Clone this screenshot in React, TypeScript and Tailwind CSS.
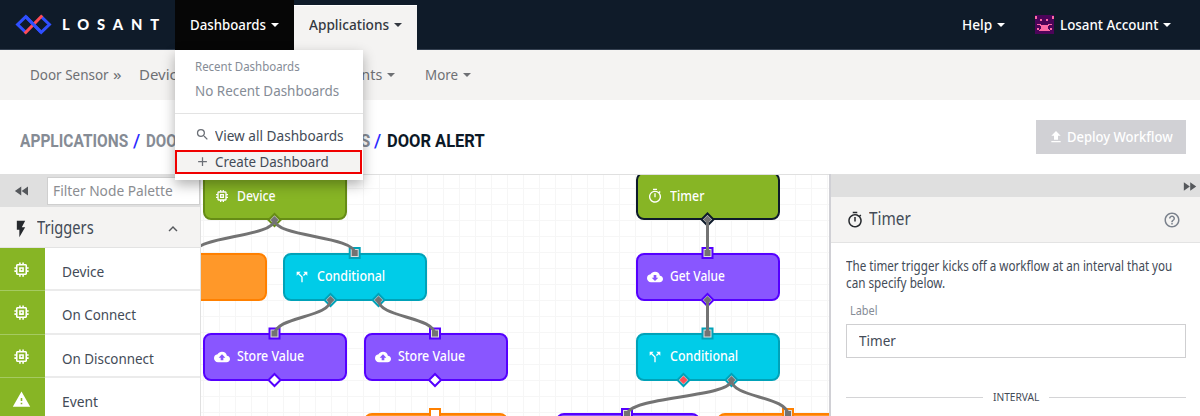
import { useLayoutEffect, useRef, useState } from "react";
import {
  MdMemory, MdOutlineTimer, MdCallSplit, MdBackup, MdCloudDownload, MdWarning, MdFileUpload,
  MdSearch, MdAdd, MdFlashOn, MdHelpOutline, MdExpandLess, MdFastRewind, MdFastForward,
} from "react-icons/md";

/* A single line of slightly condensed text, fitted to a width of `w` pixels. */
function Line({ w, className = "", children }: { w: number; className?: string; children: string }) {
  const ref = useRef<HTMLSpanElement>(null);
  const [scale, setScale] = useState(1);
  useLayoutEffect(() => {
    if (ref.current) setScale(w / ref.current.offsetWidth);
  }, [w, children]);
  return (
    <span className={`flex shrink-0 ${className}`} style={{ width: w }}>
      <span ref={ref} className="inline-block shrink-0 origin-left whitespace-nowrap" style={{ transform: `scaleX(${scale})` }}>
        {children}
      </span>
    </span>
  );
}

function Caret({ className = "" }: { className?: string }) {
  return (
    <svg className={`h-1 w-2 shrink-0 ${className}`} viewBox="0 0 8 4" fill="currentColor">
      <path d="M0 0H8L4 4Z" />
    </svg>
  );
}

function Logo() {
  return (
    <svg className="h-[22px] w-[37px] shrink-0" viewBox="0 0 37 22" fill="none" strokeWidth="3">
      <path d="M18.5 10.5L10.8 2.6L2.6 10.5L10.8 18.4M18.5 10.5L26.2 18.4L34.4 10.5L26.2 2.6" stroke="#2f4fff" />
      <path d="M10.8 18.4L26.2 2.6" stroke="#ff4b55" strokeLinecap="square" />
      <path d="M10.8 2.6L26.2 18.4" stroke="#2f4fff" />
    </svg>
  );
}

function Avatar() {
  return (
    <svg className="h-[19px] w-[19px]" viewBox="0 0 19 19" shapeRendering="crispEdges">
      <path fill="#4c0459" d="M0 0H19V19H0Z" />
      <path fill="#fd69a6" d="M0 1H2V4H0ZM17 1H19V4H17ZM5 4H7V6H5ZM11 4H13V6H11ZM2 9H6V10H2ZM13 9H17V10H13ZM5 10H14V11H5ZM6 11H13V14H6ZM2 13H4V15H2ZM15 13H17V15H15ZM5 14H14V15H5ZM4 15H15V16H4Z" />
    </svg>
  );
}

function Header() {
  return (
    <header className="relative z-20 flex h-[50px] shrink-0 border-b border-[#344050] bg-[#0f1b29] text-white">
      <div className="flex w-[175px] items-center pl-[15px]">
        <Logo />
        <Line w={105} className="mb-px ml-[10px] font-[Lato] text-[15px] leading-[18px] font-black tracking-[8px]">LOSANT</Line>
      </div>
      <div className="relative h-[50px] w-[119px] bg-[#060606]">
        <div className="flex h-full items-center pb-px pl-[15px]">
          <Line w={76} className="text-[15px] font-medium">Dashboards</Line>
          <Caret className="ml-[5px]" />
        </div>
        <Menu />
      </div>
      <div className="mt-[5px] flex h-[45px] w-[123px] items-center border-t border-white bg-[#f4f3f2] pb-[7px] pl-[15px] text-[#333840]">
        <Line w={80} className="text-[15px] font-medium">Applications</Line>
        <Caret className="ml-[5px]" />
      </div>
      <div className="ml-auto flex items-center pr-[29px]">
        <Line w={30} className="text-[15px] font-medium">Help</Line>
        <Caret className="mr-[30px] ml-[5px]" />
        <Avatar />
        <Line w={98} className="ml-[6px] text-[15px] font-medium">Losant Account</Line>
        <Caret className="ml-[5px]" />
      </div>
    </header>
  );
}

function Menu() {
  return (
    <div className="absolute top-[50px] left-0 h-[130px] w-[188px] bg-white text-[#434b57] shadow-[0_5px_12px_rgba(0,0,0,0.3)]">
      <div className="flex h-[64px] flex-col border-b border-[#e3e3e3] pt-[6px] pl-5 text-[#858c96]">
        <Line w={105} className="text-[13px] leading-5">Recent Dashboards</Line>
        <Line w={144} className="mt-[3px] text-[15px] leading-[22px]">No Recent Dashboards</Line>
      </div>
      <div className="mt-[8px] flex h-[25px] items-center pl-[20px]">
        <MdSearch className="mr-[5px] size-[15px] text-[#6b6f76]" />
        <Line w={129} className="text-[15px] leading-5">View all Dashboards</Line>
      </div>
      <div className="mt-[3px] flex h-[24px] w-[187px] items-center border-2 border-[#f00000] bg-[#f4f3f2] pb-[2px] pl-[18px]">
        <MdAdd className="mr-[5px] size-[15px] text-[#6b6f76]" />
        <Line w={114} className="text-[15px] leading-5">Create Dashboard</Line>
      </div>
    </div>
  );
}

function SubNav() {
  return (
    <nav className="flex h-[50px] shrink-0 items-center bg-[#f4f3f2] pb-px pl-[30px] text-[15px] text-[#6e7074]">
      <Line w={79}>Door Sensor</Line>
      <Line w={9} className="ml-[4px]">»</Line>
      <Line w={53} className="ml-[17px]">Devices</Line>
      <Caret className="ml-[5px]" />
      <div className="flex w-[190px] items-center justify-end">
        <Line w={44}>Events</Line>
        <Caret className="ml-[5px]" />
      </div>
      <Line w={33} className="ml-[30px]">More</Line>
      <Caret className="ml-[5px]" />
    </nav>
  );
}

function TitleRow() {
  return (
    <div className="flex h-[74px] shrink-0 items-center bg-white pr-[14px] pl-5">
      <div className="flex pt-[10px] font-[Roboto] text-[18.5px] font-bold text-[#868c95]">
        <Line w={108}>APPLICATIONS</Line>
        <Line w={7} className="ml-[5px] font-medium text-[#2b2bff]">/</Line>
        <Line w={102} className="ml-[6px]">DOOR SENSOR</Line>
        <Line w={99} className="ml-[23px]">WORKFLOWS</Line>
        <Line w={7} className="ml-[4px] font-medium text-[#2b2bff]">/</Line>
        <Line w={98} className="ml-[6px] text-[#0c1826]">DOOR ALERT</Line>
      </div>
      <button className="ml-auto flex h-[34px] w-[150px] items-center bg-[#d1d1d5] pb-px pl-[12px] text-[15px] font-medium text-white">
        <MdFileUpload className="mr-[3px] size-4" />
        <Line w={106}>Deploy Workflow</Line>
      </button>
    </div>
  );
}

const triggers = [
  { name: "Device", w: 42, icon: MdMemory },
  { name: "On Connect", w: 74, icon: MdMemory },
  { name: "On Disconnect", w: 92, icon: MdMemory },
  { name: "Event", w: 36, icon: MdWarning },
];

function Palette() {
  return (
    <aside className="flex w-[201px] shrink-0 flex-col border-r border-[#e0e0e0] bg-white text-[#434b57]">
      <div className="flex h-[33px] shrink-0 items-center bg-[#dfdfdf]">
        <MdFastRewind className="mr-[16px] ml-[13px] size-[18px] text-[#55585c]" />
        <div className="flex h-[28px] w-[153px] items-center border border-[#cfcfcf] bg-white pl-[5px] text-[#8b8d91]">
          <Line w={120} className="text-[15px]">Filter Node Palette</Line>
        </div>
      </div>
      <div className="flex h-[41px] shrink-0 items-center border-b border-[#e3e3e3] bg-[#f4f3f2] pl-[11px]">
        <MdFlashOn className="mt-[3px] size-5 text-[#26292e]" />
        <Line w={57} className="mt-px ml-[6px] text-[17.5px]">Triggers</Line>
        <MdExpandLess className="mt-[3px] mr-[18px] ml-auto size-[18px] text-[#55585c]" />
      </div>
      {triggers.map(({ name, w, icon: Icon }) => (
        <div key={name} className="flex h-[43.4px] shrink-0">
          <div className="flex w-[45px] justify-center border-b border-[#a5ca62] bg-[#87b525] pt-[12px] pr-[3px] text-white">
            <Icon className="size-[19px]" />
          </div>
          <div className="flex flex-1 items-center border-b-2 border-[#ebebeb] pt-[5px] pl-[16.5px]">
            <Line w={w} className="text-[15px]">{name}</Line>
          </div>
        </div>
      ))}
    </aside>
  );
}

const PURPLE = "#5500ff";
const TEAL = "#00a2b8";
const ORANGE = "#ff8000";
const GREEN = "#668c16";
const NAVY = "#0d1a2a";

const nodes = [
  { at: "left-[2px] top-[-2px]", skin: "border-[#668c16] bg-[#87b525]", icon: MdMemory, name: "Device", w: 39 },
  { at: "left-[-78px] top-[78.5px]", skin: "border-[#ff8000] bg-[#ff9829]", name: "", w: 0 },
  { at: "left-[82px] top-[78.5px]", skin: "border-[#00a2b8] bg-[#00cce8]", icon: MdCallSplit, name: "Conditional", w: 68 },
  { at: "left-[2px] top-[158.5px]", skin: "border-[#5500ff] bg-[#8956ff]", icon: MdBackup, name: "Store Value", w: 67 },
  { at: "left-[162.5px] top-[158.5px]", skin: "border-[#5500ff] bg-[#8956ff]", icon: MdBackup, name: "Store Value", w: 67 },
  { at: "left-[162.5px] top-[238.5px]", skin: "border-[#ff8000] bg-[#ff9829]", name: "", w: 0 },
  { at: "left-[435px] top-[-2px]", skin: "border-[#0d1a2a] bg-[#87b525]", icon: MdOutlineTimer, name: "Timer", w: 34 },
  { at: "left-[435px] top-[78.5px]", skin: "border-[#5500ff] bg-[#8956ff]", icon: MdCloudDownload, name: "Get Value", w: 55 },
  { at: "left-[435px] top-[158.5px]", skin: "border-[#00a2b8] bg-[#00cce8]", icon: MdCallSplit, name: "Conditional", w: 68 },
  { at: "left-[355px] top-[238.5px]", skin: "border-[#5500ff] bg-[#8956ff]", name: "", w: 0 },
  { at: "left-[516px] top-[238.5px]", skin: "border-[#ff8000] bg-[#ff9829]", name: "", w: 0 },
];

const inputs: [number, number, string, boolean][] = [
  [354.7, 253, TEAL, true],
  [274.5, 333.5, PURPLE, true],
  [435, 333.5, PURPLE, true],
  [435, 414, ORANGE, false],
  [707.5, 253, PURPLE, true],
  [707.5, 333.5, TEAL, true],
  [627, 414, PURPLE, true],
  [788, 414, ORANGE, true],
];

const outputs: [number, number, string, string][] = [
  [274.5, 220, GREEN, "#737373"],
  [330.5, 300, TEAL, "#737373"],
  [378.5, 300, TEAL, "#737373"],
  [274.5, 380, PURPLE, ""],
  [435, 380, PURPLE, ""],
  [707.5, 219.5, NAVY, "#737373"],
  [707.5, 300, PURPLE, "#737373"],
  [683.5, 380, TEAL, "#ff4d55"],
  [731.5, 380, TEAL, "#737373"],
];

const wires = [
  "M274.5 220C274.5 237 194.5 236 194.5 253",
  "M274.5 220C274.5 237 354.7 236 354.7 253",
  "M330.5 300C330.5 318 274.5 316 274.5 335",
  "M378.5 300C378.5 318 435 316 435 335",
  "M707.5 220V254",
  "M707.5 300V334",
  "M731.5 380C731.5 398 627 396 627 415",
  "M731.5 380C731.5 398 788 396 788 415",
];

function Canvas() {
  return (
    <main className="relative w-[628px] shrink-0 overflow-hidden border-t border-[#e0e0e0] bg-white bg-[linear-gradient(to_right,#f6f6f6_1px,transparent_1px),linear-gradient(#f6f6f6_1px,transparent_1px)] bg-[length:16px_16px] bg-[position:2px_13px]">
      <div className="absolute -top-px left-0 h-[242px] w-[628px]">
        {nodes.map(({ at, skin, icon: Icon, name, w }) => (
          <div key={at} className={`absolute flex h-12 w-36 items-center rounded-[8px] border-2 pl-[9px] text-white ${at} ${skin}`}>
            {Icon && (
              <span className="mr-[7px] flex w-4 shrink-0 justify-center">
                <Icon className="size-4 shrink-0" />
              </span>
            )}
            {name && <Line w={w} className="text-[13.5px] font-medium">{name}</Line>}
          </div>
        ))}
        <svg className="absolute inset-0 h-[242px] w-[628px]" viewBox="201 174 628 242" fill="none">
          {inputs.map(([x, y, color, wired]) => (
            <g key={`${x}-${y}`}>
              <rect x={x - 5} y={y - 5} width="10" height="10" fill={wired ? "#dedede" : "#ffffff"} stroke={color} strokeWidth="2" />
              {wired && <rect x={x - 3} y={y - 3} width="6" height="6" fill="#737373" />}
            </g>
          ))}
          {outputs.map(([x, y, color, core]) => (
            <g key={`${x}-${y}`} transform={`translate(${x} ${y})`}>
              <path d="M0 -6L6 0L0 6L-6 0Z" fill={core ? "#dedede" : "#ffffff"} stroke={color} strokeWidth="2" />
              {core && <path d="M0 -4L4 0L0 4L-4 0Z" fill={core} />}
            </g>
          ))}
          {wires.map((d) => <path key={d} d={d} stroke="#737373" strokeWidth="3" />)}
        </svg>
      </div>
    </main>
  );
}

function Inspector() {
  return (
    <aside className="flex flex-1 flex-col border-l-2 border-[#d0d0d5] bg-white text-[#434b57]">
      <div className="flex h-[23px] shrink-0 items-center justify-end border-t border-[#e0e0e0] bg-[#dfdfdf] pr-[2px]">
        <MdFastForward className="size-[17px] text-[#55585c]" />
      </div>
      <div className="flex h-[46px] shrink-0 items-center border-b border-[#e3e3e3] bg-[#f4f3f2] pr-[19px] pl-[15px]">
        <MdOutlineTimer className="size-[18px] text-[#26292e]" />
        <Line w={42} className="ml-[5px] pb-[2px] text-[17.5px]">Timer</Line>
        <MdHelpOutline className="ml-auto size-[18px] text-[#7b828d]" />
      </div>
      <div className="flex flex-col items-start pt-[15px] pr-[14px] pl-[15px]">
        <Line w={326} className="text-[13.5px] leading-[17px]">The timer trigger kicks off a workflow at an interval that you</Line>
        <Line w={99} className="text-[13.5px] leading-[17px]">can specify below.</Line>
        <Line w={28} className="mt-[10px] ml-1 text-[12.5px] leading-[18px] text-[#858c96]">Label</Line>
        <div className="mt-[4px] flex h-[34px] w-full items-center border border-[#cfcfd1] pb-px pl-[12px]">
          <Line w={37} className="text-[15px]">Timer</Line>
        </div>
        <div className="mt-[30px] flex w-full items-center gap-[10px]">
          <span className="h-px flex-1 bg-[#d4d4d6]" />
          <Line w={46} className="text-[11.5px] leading-[18px]">INTERVAL</Line>
          <span className="h-px flex-1 bg-[#d4d4d6]" />
        </div>
      </div>
    </aside>
  );
}

export default function App() {
  return (
    <div className="flex h-[416px] w-[1200px] flex-col overflow-hidden bg-white font-['Noto_Sans',sans-serif]">
      <Header />
      <SubNav />
      <TitleRow />
      <div className="flex h-[242px] shrink-0">
        <Palette />
        <Canvas />
        <Inspector />
      </div>
    </div>
  );
}
